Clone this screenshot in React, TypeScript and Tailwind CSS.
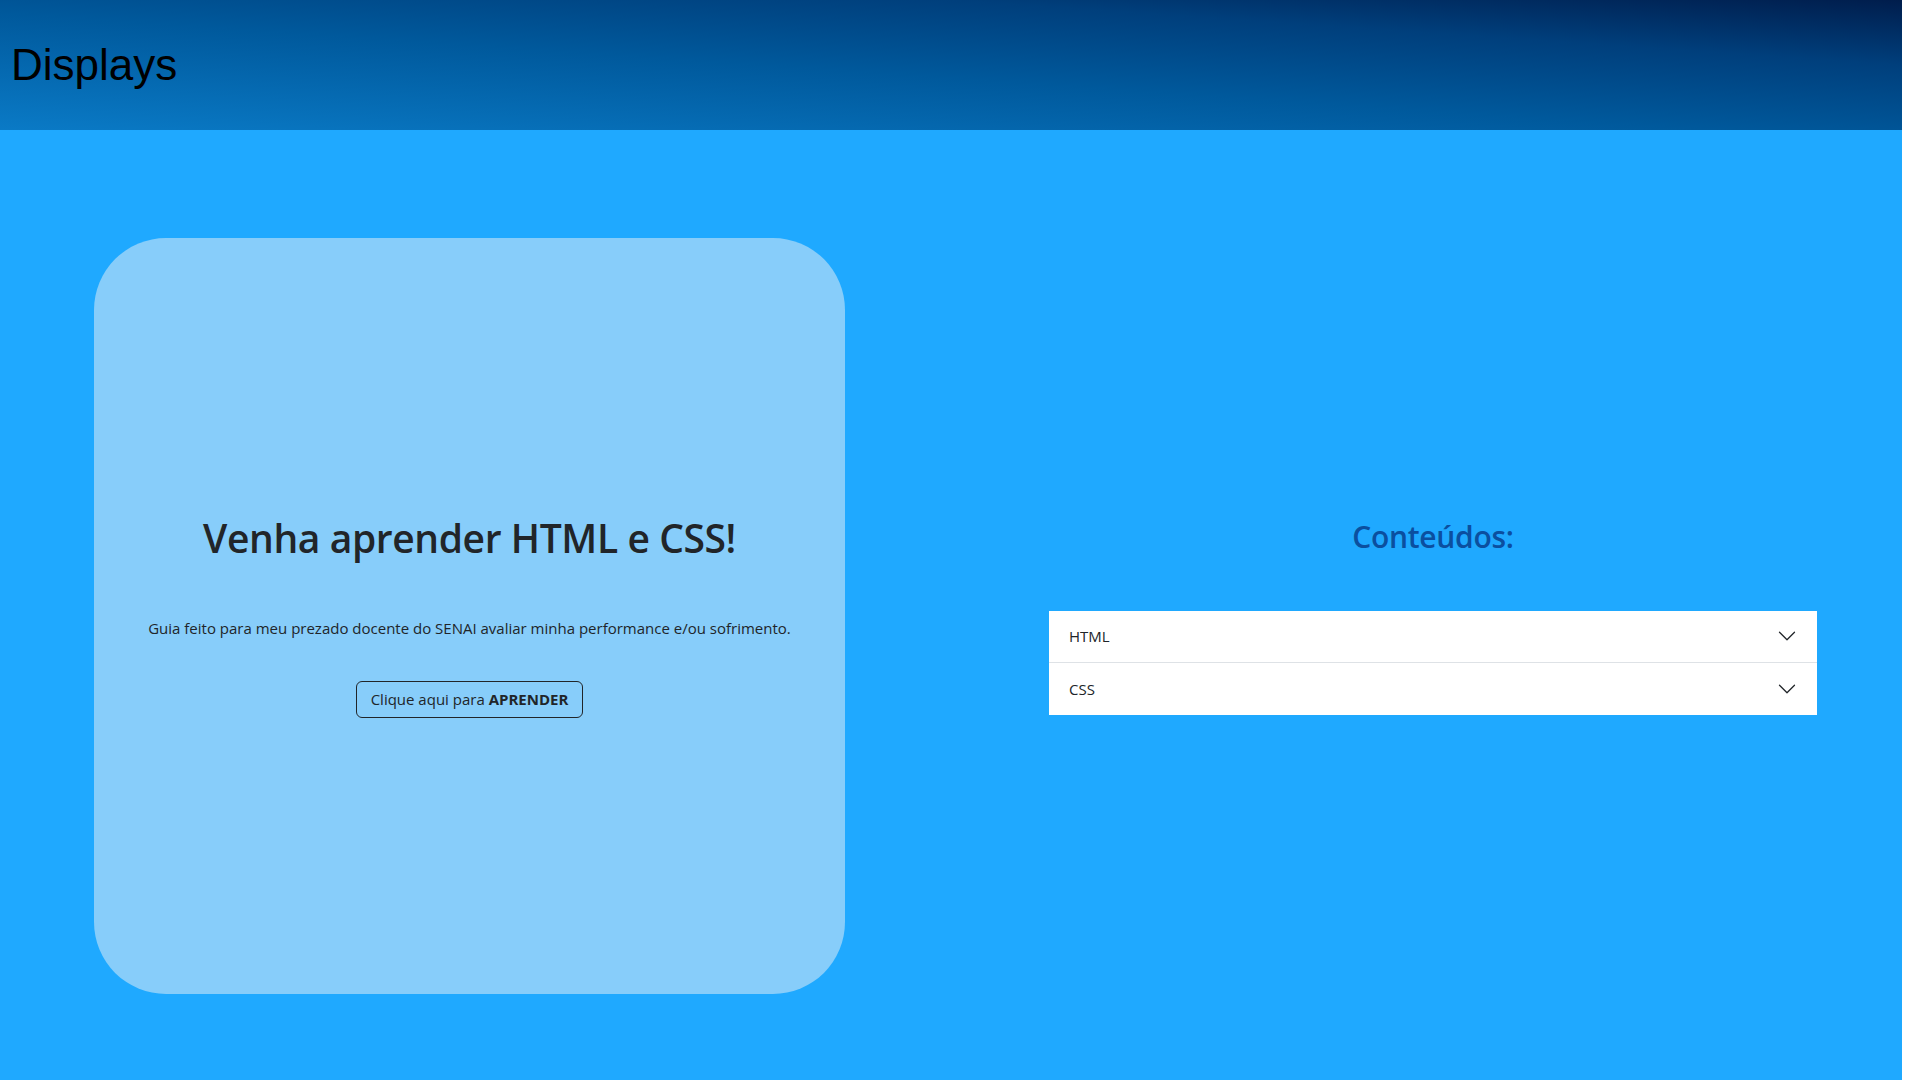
import React from "react";

function Chevron() {
  return (
    <svg width="20" height="20" viewBox="0 0 16 16" fill="none" className="ml-auto shrink-0">
      <path d="M2 5L8 11L14 5" stroke="#212529" strokeWidth="1" strokeLinecap="round" strokeLinejoin="round" />
    </svg>
  );
}

function AccItem({ label, last }: { label: string; last?: boolean }) {
  return (
    <button
      className={
        "flex w-full items-center h-[52px] px-[20px] text-left text-[15px] leading-[20px] text-[#212529] bg-white " +
        (last ? "" : "border-b border-[#dee2e6]")
      }
    >
      <span>{label}</span>
      <Chevron />
    </button>
  );
}

export default function App() {
  return (
    <div className="w-[1902px] min-h-[1080px] bg-white" style={{ fontFamily: '"Open Sans", "Noto Sans", sans-serif' }}>
      <header className="h-[130px] flex items-center pl-[11px] bg-[linear-gradient(to_top_right,#0a7ac6_0%,#00599c_45%,#003f7c_75%,#001d4c_100%)]">
        <h1 className="text-[44px] leading-none text-black" style={{ fontFamily: '"Liberation Sans", Arial, sans-serif' }}>
          Displays
        </h1>
      </header>
      <main className="h-[950px] bg-[#1fa9ff] flex pt-[108px] pl-[94px]">
        <section className="w-[751px] h-[756px] rounded-[72px] bg-[#87cdfa] flex flex-col items-center justify-center text-[#212529]">
          <h2 className="text-[39px] leading-[48px] font-semibold tracking-[-0.4px]">Venha aprender HTML e CSS!</h2>
          <p className="mt-[54px] text-[15px] leading-[24px]">
            Guia feito para meu prezado docente do SENAI avaliar minha performance e/ou sofrimento.
          </p>
          <button className="mt-[41px] h-[37px] px-[14px] border border-[#212529] rounded-[6px] text-[15px] text-[#212529]">
            Clique aqui para <b className="font-bold">APRENDER</b>
          </button>
        </section>
        <section className="ml-[204px] w-[768px] h-[756px] flex flex-col justify-center">
          <h2 className="text-center text-[30px] leading-[38px] font-semibold tracking-[-0.3px] text-[#0b4f9f]">Conteúdos:</h2>
          <div className="mt-[55px] bg-white">
            <AccItem label="HTML" />
            <AccItem label="CSS" last />
          </div>
        </section>
      </main>
    </div>
  );
}
